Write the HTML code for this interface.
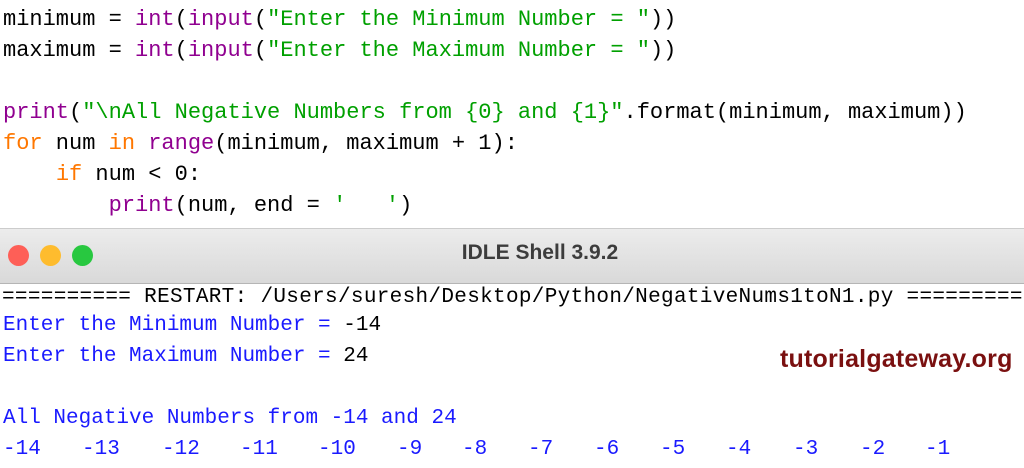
<!DOCTYPE html>
<html><head><meta charset="utf-8"><style>
body{margin:0;width:1024px;height:468px;overflow:hidden;background:#fff;position:relative;font-family:"Liberation Mono",monospace;}
.l{position:absolute;left:3px;white-space:pre;font-size:22px;line-height:31px;color:#000;}
.p{color:#900090}.g{color:#00a000}.o{color:#ff7700}.b{color:#1a1aff}
.bar{position:absolute;left:0;top:228px;width:1024px;height:54px;background:linear-gradient(#ececec,#d9d9d9);border-top:1px solid #ccc;border-bottom:1px solid #b5b5b5;}
.d{position:absolute;top:16px;width:21px;height:21px;border-radius:50%}
.t{position:absolute;left:0;width:1024px;top:12px;text-align:center;font:bold 21px "Liberation Sans",sans-serif;color:#3c3c3c;padding-left:56px;box-sizing:border-box}
.s{position:absolute;white-space:pre;font-size:21px;line-height:31px;}
.n{position:absolute;top:434px;font-size:21px;color:#1a1aff;line-height:31px}
.logo{position:absolute;left:780px;top:345px;font:bold 25px "Liberation Sans",sans-serif;color:#7a1010;letter-spacing:0.2px}
</style></head><body>
<div class="l" style="top:4px">minimum = <span class="p">int</span>(<span class="p">input</span>(<span class="g">"Enter the Minimum Number = "</span>))</div>
<div class="l" style="top:35px">maximum = <span class="p">int</span>(<span class="p">input</span>(<span class="g">"Enter the Maximum Number = "</span>))</div>
<div class="l" style="top:97px"><span class="p">print</span>(<span class="g">"\nAll Negative Numbers from {0} and {1}"</span>.format(minimum, maximum))</div>
<div class="l" style="top:128px"><span class="o">for</span> num <span class="o">in</span> <span class="p">range</span>(minimum, maximum + 1):</div>
<div class="l" style="top:159px">    <span class="o">if</span> num &lt; 0:</div>
<div class="l" style="top:190px">        <span class="p">print</span>(num, end = <span class="g">'   '</span>)</div>
<div class="bar">
<div class="d" style="left:8px;background:#fe5f57"></div>
<div class="d" style="left:40px;background:#febc2e"></div>
<div class="d" style="left:72px;background:#28c840"></div>
<div class="t">IDLE Shell 3.9.2</div>
</div>
<div class="s" style="left:2px;top:282px;letter-spacing:0.32px;width:1022px;overflow:hidden">========== RESTART: /Users/suresh/Desktop/Python/NegativeNums1toN1.py =========</div>
<div class="s" style="left:3px;top:310px"><span class="b">Enter the Minimum Number = </span>-14</div>
<div class="s" style="left:3px;top:341px"><span class="b">Enter the Maximum Number = </span>24</div>
<div class="s b" style="left:3px;top:403px">All Negative Numbers from -14 and 24</div>
<span class="n" style="left:3px">-14</span><span class="n" style="left:82px">-13</span><span class="n" style="left:162px">-12</span><span class="n" style="left:240px">-11</span><span class="n" style="left:318px">-10</span><span class="n" style="left:397px">-9</span><span class="n" style="left:462px">-8</span><span class="n" style="left:528px">-7</span><span class="n" style="left:594px">-6</span><span class="n" style="left:660px">-5</span><span class="n" style="left:726px">-4</span><span class="n" style="left:793px">-3</span><span class="n" style="left:860px">-2</span><span class="n" style="left:925px">-1</span>
<div class="logo">tutorialgateway.org</div>
</body></html>
